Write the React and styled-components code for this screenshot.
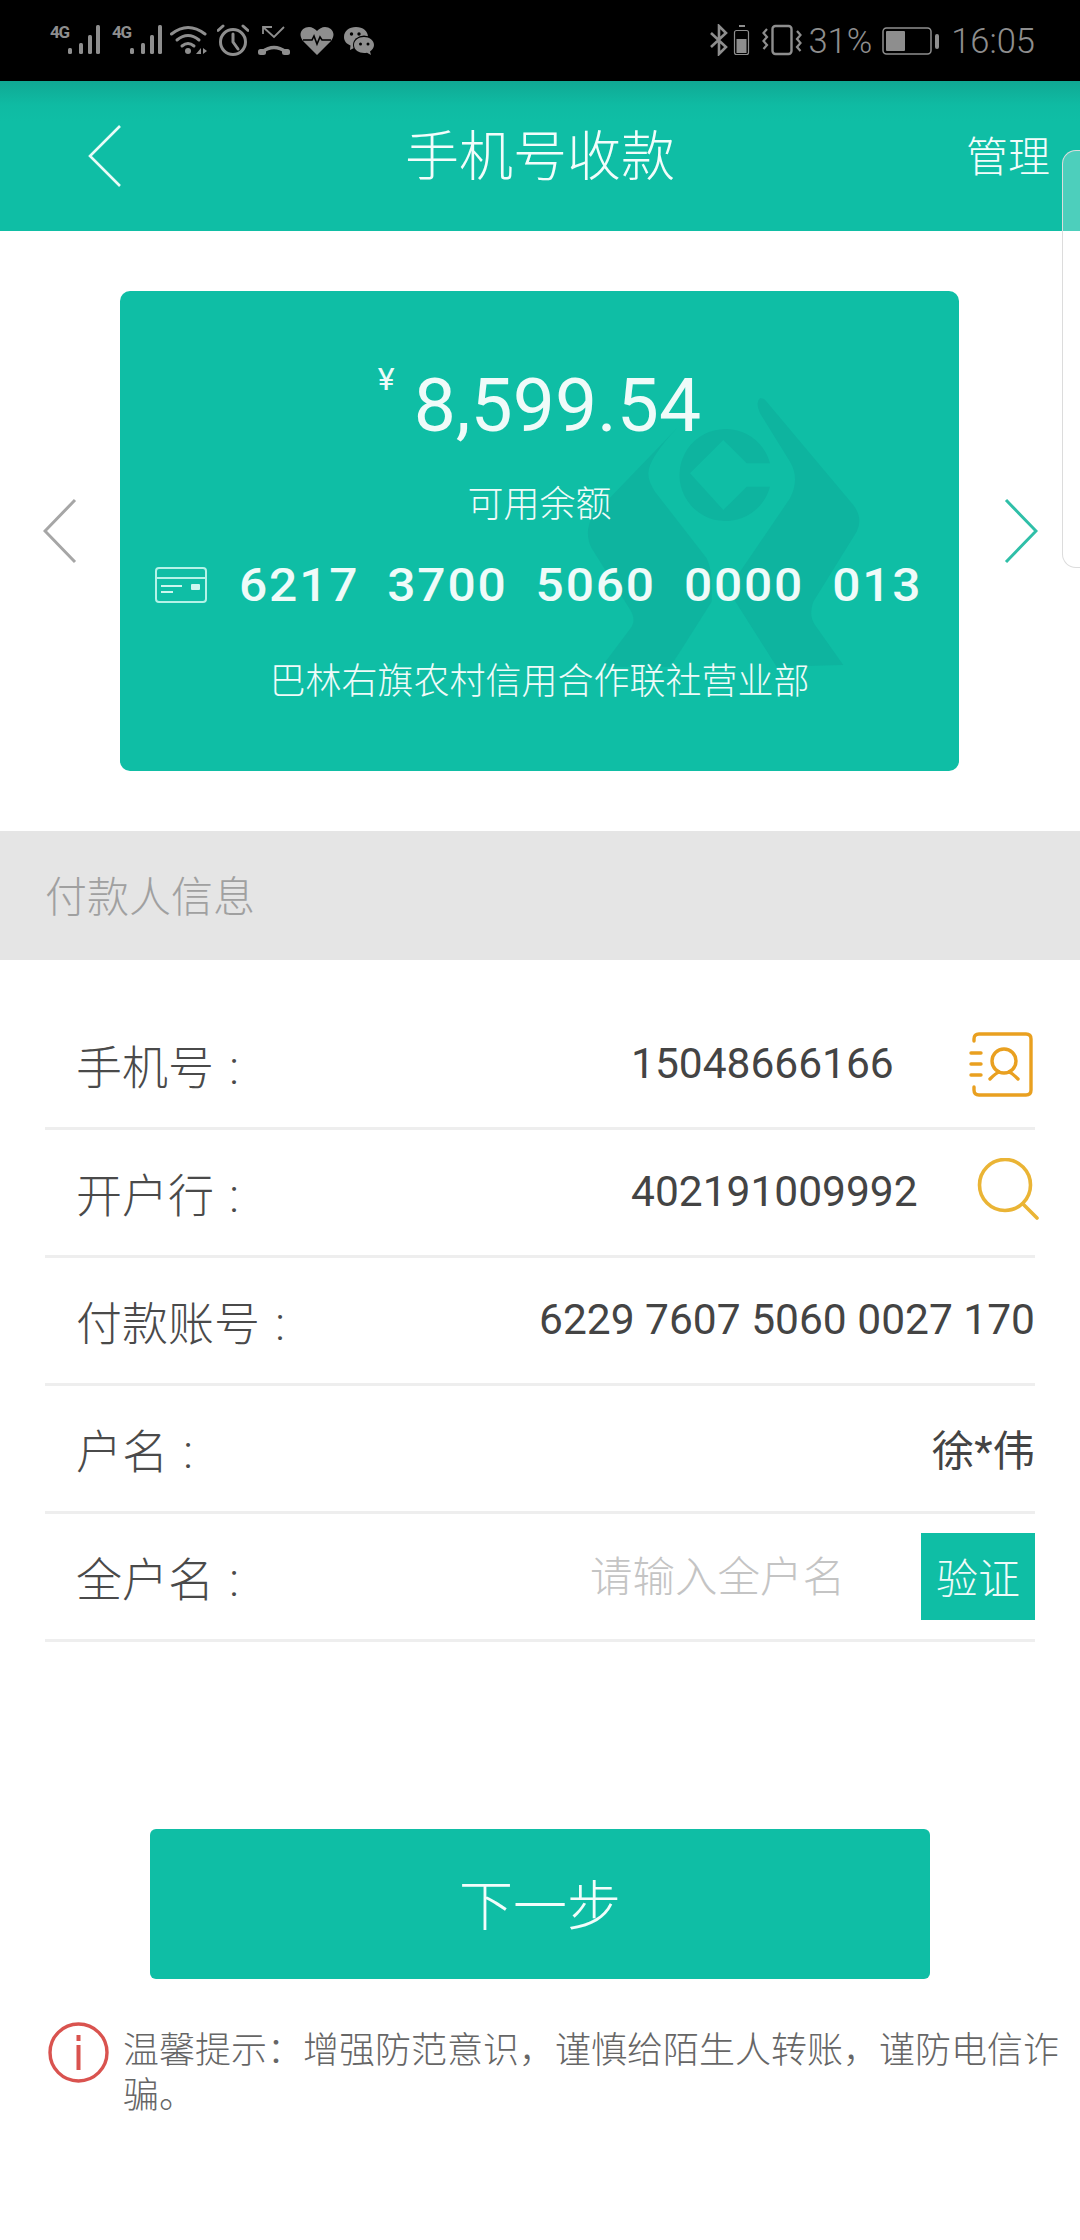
import React from "react";
import styled, { createGlobalStyle } from "styled-components";

const TEAL = "#0fbea5";
const BAR_GREY = "#8e8e8e";

const GlobalStyle = createGlobalStyle`
  html, body {
    margin: 0;
    padding: 0;
    background: #fff;
  }
  body {
    font-family: Roboto, "Noto Sans CJK SC", sans-serif;
  }
`;

const Page = styled.div`
  position: relative;
  width: 1080px;
  height: 2240px;
  overflow: hidden;
  background: #fff;
`;

/* status bar */
const StatusBar = styled.div`
  display: flex;
  justify-content: space-between;
  align-items: flex-start;
  height: 81px;
  box-sizing: border-box;
  padding: 24px 45px 0 50px;
  background: #000;
  color: ${BAR_GREY};
`;

const StatusGroup = styled.div`
  display: flex;
  align-items: flex-start;
`;

const StatusIcon = styled.svg`
  display: block;
  height: 32px;
  width: ${(p) => p.$w}px;
  margin-left: ${(p) => p.$gap || 0}px;
  flex: none;
`;

const StatusText = styled.span`
  font-size: 34.5px;
  font-weight: 300;
  line-height: 34px;
  margin-left: ${(p) => p.$gap || 0}px;
`;

const SignalBox = styled.div`
  display: flex;
  align-items: flex-start;
  margin-left: ${(p) => p.$gap || 0}px;
`;

const NetworkType = styled.span`
  width: 18px;
  font-size: 17px;
  font-weight: 700;
  letter-spacing: -1.2px;
  line-height: 17px;
`;

const Signal = ({ gap }) => (
  <SignalBox $gap={gap}>
    <NetworkType>4G</NetworkType>
    <StatusIcon $w={34} viewBox="0 0 34 32">
      <g fill={BAR_GREY}>
        <rect x="0" y="24" width="4" height="6" rx="1.5" />
        <rect x="11" y="19" width="4" height="11" rx="1.5" />
        <rect x="20" y="11" width="4" height="19" rx="1.5" />
        <rect x="28" y="1" width="4" height="29" rx="1.5" />
      </g>
    </StatusIcon>
  </SignalBox>
);

const Wifi = ({ gap }) => (
  <StatusIcon $w={38} $gap={gap} viewBox="0 0 38 32">
    <g fill="none" stroke={BAR_GREY} strokeWidth="3" strokeLinecap="round">
      <path d="M1.5 10 Q18 -3 35 10" />
      <path d="M7 16 Q18 7 29 16" />
      <path d="M12 22 Q18 17 24 22" />
    </g>
    <circle cx="18" cy="27" r="3" fill={BAR_GREY} />
    <path d="M31 24 V30 H26 Z M33 24 L37 27 L33 30 Z" fill={BAR_GREY} />
  </StatusIcon>
);

const Alarm = ({ gap }) => (
  <StatusIcon $w={32} $gap={gap} viewBox="0 0 32 32">
    <g fill="none" stroke={BAR_GREY} strokeWidth="3" strokeLinecap="round" strokeLinejoin="round">
      <circle cx="16" cy="18" r="12.5" />
      <path d="M16 10 V18 L21 25" />
      <path d="M1 6.5 L6 2 M26 2 L31 6.5" />
    </g>
  </StatusIcon>
);

const MissedCall = ({ gap }) => (
  <StatusIcon $w={32} $gap={gap} viewBox="0 0 32 32">
    <path d="M14 3 H5 V10 M5 3 L16 13 L26 3" fill="none" stroke={BAR_GREY} strokeWidth="1.8" />
    <path d="M4 28 Q16 19 28 28" fill="none" stroke={BAR_GREY} strokeWidth="3.5" />
    <rect x="0" y="25" width="8" height="6" rx="2.5" fill={BAR_GREY} />
    <rect x="24" y="25" width="8" height="6" rx="2.5" fill={BAR_GREY} />
  </StatusIcon>
);

const HeartRate = ({ gap }) => (
  <StatusIcon $w={34} $gap={gap} viewBox="0 0 34 32">
    <path d="M17 31 L3 17 C-3 9 3 3 9 3 C12 3 15 5 17 7 C19 5 22 3 25 3 C31 3 37 9 31 17 Z" fill={BAR_GREY} />
    <path d="M3 16 H12 L14 12 L17 20 L20 13 L22 16 H31" fill="none" stroke="#000" strokeWidth="1.6" />
  </StatusIcon>
);

const Chat = ({ gap }) => (
  <StatusIcon $w={32} $gap={gap} viewBox="0 0 32 32">
    <path d="M14 3 C21 3 26 7 26 13 C26 19 21 23 14 23 L8 26 L8.5 21.5 C4.5 20 2 17 2 13 C2 7 7 3 14 3 Z" fill={BAR_GREY} />
    <ellipse cx="22" cy="21" rx="11" ry="9.5" fill="#000" />
    <path d="M22 13 C27.5 13 32 16.5 32 21 C32 24 30 26 28 27.5 L29 31 L25 28.7 C19 30 12 27 12 21 C12 16.5 16.5 13 22 13 Z" fill={BAR_GREY} />
    <g fill="#000">
      <circle cx="9.5" cy="10" r="1.7" />
      <circle cx="17" cy="10" r="1.7" />
      <circle cx="18.5" cy="20" r="1.5" />
      <circle cx="26" cy="20" r="1.5" />
    </g>
  </StatusIcon>
);

const BluetoothBattery = ({ gap }) => (
  <StatusIcon $w={42} $gap={gap} viewBox="0 0 42 32">
    <path d="M3 9 L18 23 L11 30 V2 L18 9 L3 23" fill="none" stroke={BAR_GREY} strokeWidth="2.6" />
    <rect x="26.5" y="6.5" width="14" height="24" rx="2" fill="none" stroke={BAR_GREY} strokeWidth="1.2" />
    <rect x="31" y="1" width="6" height="2" fill={BAR_GREY} />
    <rect x="28.5" y="15" width="10" height="14" fill={BAR_GREY} />
  </StatusIcon>
);

const Vibrate = ({ gap }) => (
  <StatusIcon $w={40} $gap={gap} viewBox="0 0 40 32">
    <rect x="10.5" y="2" width="19" height="28" rx="3" fill="none" stroke={BAR_GREY} strokeWidth="2.4" />
    <g fill="none" stroke={BAR_GREY} strokeWidth="2.2">
      <path d="M5 5 L1.5 9 L5 13 L1.5 17 L5 21 L1.5 25" />
      <path d="M35 7 L38.5 11 L35 15 L38.5 19 L35 23 L38.5 27" />
    </g>
  </StatusIcon>
);

const Battery = ({ gap }) => (
  <StatusIcon $w={58} $gap={gap} viewBox="0 0 58 32">
    <rect x="1" y="4" width="48" height="26" rx="3.5" fill="none" stroke={BAR_GREY} strokeWidth="1.5" />
    <rect x="4" y="7" width="19" height="20" rx="1" fill={BAR_GREY} />
    <rect x="53" y="10" width="4" height="15" rx="2" fill={BAR_GREY} />
  </StatusIcon>
);

/* title bar */
const Header = styled.header`
  display: grid;
  grid-template-columns: 1fr auto 1fr;
  align-items: center;
  height: 150px;
  background: linear-gradient(#10a994 0, #0fbba3 24px, ${TEAL} 40px);
  color: #f2fdfb;
`;

const BackIcon = styled.svg`
  display: block;
  width: 34px;
  height: 64px;
  margin-left: 88px;
`;

const Title = styled.h1`
  margin: 4px 0 0;
  font-size: 54px;
  font-weight: 300;
  line-height: 70px;
`;

const Manage = styled.span`
  justify-self: end;
  margin: 3px 30px 0 0;
  font-size: 42px;
  font-weight: 300;
  line-height: 60px;
`;

/* floating side handle, sits over the page */
const SideHandle = styled.div`
  position: absolute;
  top: 150px;
  right: 0;
  width: 18px;
  height: 418px;
  box-sizing: border-box;
  border: 1.5px solid #dcdcdc;
  border-right: 0;
  border-radius: 14px 0 0 14px;
  background: rgba(255, 255, 255, 0.26);
`;

/* account carousel */
const Carousel = styled.section`
  display: grid;
  grid-template-columns: 120px 839px 121px;
  align-items: center;
  padding: 60px 0;
`;

const Arrow = styled.svg`
  display: block;
  width: 34px;
  height: 66px;
  margin-left: ${(p) => p.$left}px;
`;

const Card = styled.div`
  position: relative;
  overflow: hidden;
  display: flex;
  flex-direction: column;
  align-items: center;
  height: 480px;
  background: ${TEAL};
  border-radius: 10px;
  color: #effbf9;
`;

const Watermark = styled.svg`
  position: absolute;
  left: 450px;
  top: 94px;
  width: 310px;
  height: 300px;
`;

const AmountRow = styled.div`
  position: relative;
  display: flex;
  justify-content: center;
  margin-top: 69px;
  height: 90px;
`;

const Currency = styled.span`
  font-size: 32px;
  line-height: 32px;
  margin: 3px 19px 0 0;
`;

const Amount = styled.span`
  font-size: 75px;
  font-weight: 400;
  line-height: 90px;
`;

const CardLabel = styled.div`
  position: relative;
  font-size: 36px;
  font-weight: 300;
  line-height: 50px;
  margin-top: ${(p) => p.$top}px;
`;

const NumberRow = styled.div`
  position: relative;
  display: flex;
  align-items: center;
  gap: 32px;
  height: 50px;
  margin-top: 30px;
`;

const CardIcon = styled.svg`
  display: block;
  width: 52px;
  height: 36px;
`;

/* the digits on the card are wide, so the run is stretched sideways */
const CardNumber = styled.span`
  display: inline-block;
  width: 685px;
  white-space: nowrap;
  font-size: 46px;
  font-weight: 500;
  letter-spacing: 1.7px;
  word-spacing: 12.8px;
  line-height: 50px;
  transform: scaleX(1.08);
  transform-origin: left center;
`;

/* payer form */
const SectionBar = styled.div`
  height: 129px;
  box-sizing: border-box;
  padding: 4px 0 0 45px;
  background: #e5e5e5;
  color: #a0a0a0;
  font-size: 42px;
  font-weight: 300;
  line-height: 125px;
`;

const Form = styled.div`
  padding: 42px 45px 0;
`;

const Row = styled.div`
  display: flex;
  align-items: center;
  height: 128px;
  box-sizing: border-box;
  padding-left: 31px;
  border-bottom: 3px solid #eeeeee;
`;

const Label = styled.span`
  flex: 1;
  margin-top: -2px;
  color: #4a4a4a;
  font-size: 46px;
  font-weight: 300;
  word-spacing: 4px;
`;

const Trailing = styled.div`
  display: flex;
  align-items: center;
  justify-content: space-between;
  width: ${(p) => (p.$wide ? "404px" : "auto")};
`;

const Value = styled.span`
  margin-top: -2px;
  color: #444;
  font-size: 42.5px;
  font-weight: 400;
`;

const Placeholder = styled.span`
  margin: -6px 76px 0 0;
  color: #c4c4c4;
  font-size: 42.5px;
  font-weight: 300;
`;

const VerifyButton = styled.button`
  width: 114px;
  height: 87px;
  padding: 0 0 2px;
  border: 0;
  background: ${TEAL};
  color: #effbf9;
  font-family: inherit;
  font-size: 42px;
  font-weight: 300;
`;

const ContactIcon = styled.svg`
  display: block;
  width: 66px;
  height: 66px;
`;

const SearchIcon = styled.svg`
  display: block;
  width: 62px;
  height: 62px;
  margin: -8px -4px 0 0;
`;

const NextButton = styled.button`
  display: block;
  width: 780px;
  height: 150px;
  margin: 187px auto 0;
  padding: 0 0 4px;
  border: 0;
  border-radius: 6px;
  background: ${TEAL};
  color: #f2fdfb;
  font-family: inherit;
  font-size: 54px;
  font-weight: 300;
`;

const Notice = styled.div`
  display: flex;
  align-items: flex-start;
  gap: 14px;
  margin-top: 50px;
  padding: 0 10px 0 48px;
`;

const NoticeIcon = styled.svg`
  display: block;
  flex: none;
  width: 61px;
  height: 61px;
  margin-top: -7px;
`;

const NoticeText = styled.p`
  margin: 0;
  color: #666;
  font-size: 36px;
  font-weight: 300;
  line-height: 45px;
`;

const App = () => {
  return (
    <Page>
      <GlobalStyle />
      <StatusBar>
        <StatusGroup>
          <Signal />
          <Signal gap={10} />
          <Wifi gap={6} />
          <Alarm gap={9} />
          <MissedCall gap={9} />
          <HeartRate gap={10} />
          <Chat gap={8} />
        </StatusGroup>
        <StatusGroup>
          <BluetoothBattery />
          <Vibrate gap={12} />
          <StatusText $gap={6}>31%</StatusText>
          <Battery gap={10} />
          <StatusText $gap={11}>16:05</StatusText>
        </StatusGroup>
      </StatusBar>

      <Header>
        <BackIcon viewBox="0 0 34 64">
          <path d="M32 2 L2 32 L32 62" fill="none" stroke="#eafcf8" strokeWidth="2.6" />
        </BackIcon>
        <Title>手机号收款</Title>
        <Manage>管理</Manage>
      </Header>

      <Carousel>
        <Arrow $left={43} viewBox="0 0 34 66">
          <path d="M32 2 L2 33 L32 64" fill="none" stroke="#a6a6a6" strokeWidth="3" />
        </Arrow>
        <Card>
          <Watermark viewBox="0 0 930 900">
            <g fill="#0eb49f">
              <path d="M95 845 L185 725 Q200 700 175 665 L65 490 Q40 440 70 390 L325 125 Q235 220 235 265 Q235 290 255 320 L410 520 Q430 560 425 650 L330 800 L300 845 Z" />
              <path d="M570 40 Q555 50 570 85 L660 230 Q690 280 660 340 L510 560 Q480 600 490 640 L620 845 L820 840 L735 720 Q715 690 730 650 L860 440 Q880 400 850 360 L590 50 Q580 38 570 40 Z" />
              <path fillRule="evenodd" d="M600 235 A138 138 0 1 0 600 305 L530 305 L460 375 L360 265 L460 165 L530 235 Z" />
            </g>
          </Watermark>
          <AmountRow>
            <Currency>¥</Currency>
            <Amount>8,599.54</Amount>
          </AmountRow>
          <CardLabel $top={30}>可用余额</CardLabel>
          <NumberRow>
            <CardIcon viewBox="0 0 52 36">
              <g fill="none" stroke="#b4f3e8" strokeWidth="2">
                <rect x="1" y="1" width="50" height="34" rx="3" />
                <path d="M1 11 H51" />
              </g>
              <g fill="#cdf7ef">
                <rect x="6" y="18" width="21" height="2" />
                <rect x="6" y="24" width="12" height="2" />
                <rect x="36" y="17" width="9" height="6" rx="1" />
              </g>
            </CardIcon>
            <CardNumber>6217 3700 5060 0000 013</CardNumber>
          </NumberRow>
          <CardLabel $top={47}>巴林右旗农村信用合作联社营业部</CardLabel>
        </Card>
        <Arrow $left={45} viewBox="0 0 34 66">
          <path d="M2 2 L32 33 L2 64" fill="none" stroke="#2fbfa8" strokeWidth="3" />
        </Arrow>
      </Carousel>

      <SectionBar>付款人信息</SectionBar>

      <Form>
        <Row>
          <Label>手机号 :</Label>
          <Trailing $wide>
            <Value>15048666166</Value>
            <ContactIcon viewBox="0 0 66 66">
              <g fill="none" stroke="#e9a020" strokeWidth="3.4" strokeLinecap="round">
                <path d="M5 9 V7 Q5 2 10 2 H57 Q62 2 62 7 V58 Q62 63 57 63 H10 Q5 63 5 58 V55" />
                <path d="M2 21 H12 M2 32 H12 M2 43 H12" />
                <circle cx="35" cy="29" r="12" />
                <path d="M21 47 Q27 41 30 40 M49 47 Q43 41 40 40" />
              </g>
            </ContactIcon>
          </Trailing>
        </Row>
        <Row>
          <Label>开户行 :</Label>
          <Trailing $wide>
            <Value>402191009992</Value>
            <SearchIcon viewBox="0 0 62 62">
              <g fill="none" stroke="#eab435" strokeWidth="3.6" strokeLinecap="round">
                <circle cx="28" cy="27" r="25.5" />
                <path d="M46 46 L60 60" />
              </g>
            </SearchIcon>
          </Trailing>
        </Row>
        <Row>
          <Label>付款账号 :</Label>
          <Trailing>
            <Value>6229 7607 5060 0027 170</Value>
          </Trailing>
        </Row>
        <Row>
          <Label>户名 :</Label>
          <Trailing>
            <Value>徐*伟</Value>
          </Trailing>
        </Row>
        <Row>
          <Label>全户名 :</Label>
          <Trailing>
            <Placeholder>请输入全户名</Placeholder>
            <VerifyButton>验证</VerifyButton>
          </Trailing>
        </Row>
      </Form>

      <NextButton>下一步</NextButton>

      <Notice>
        <NoticeIcon viewBox="0 0 61 61">
          <circle cx="30.5" cy="30.5" r="28.5" fill="none" stroke="#d9534f" strokeWidth="3.4" />
          <rect x="28.5" y="13" width="4" height="6" fill="#d9534f" />
          <rect x="28.5" y="23" width="4" height="25" fill="#d9534f" />
        </NoticeIcon>
        <NoticeText>温馨提示：增强防范意识，谨慎给陌生人转账，谨防电信诈骗。</NoticeText>
      </Notice>

      <SideHandle />
    </Page>
  );
};

export default App;
